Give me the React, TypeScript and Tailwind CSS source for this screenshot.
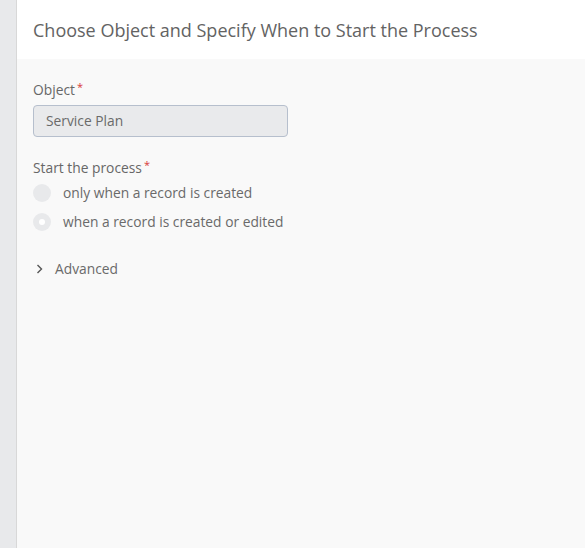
export default function App() {
  return (
    <div className="flex h-[548px] w-[585px] overflow-hidden" style={{ fontFamily: '"Open Sans", "Noto Sans", sans-serif' }}>
      <div className="w-[17px] shrink-0 bg-[#e8e9eb] border-r border-[#d8d8d8]" />
      <div className="flex flex-1 flex-col bg-[#f9f9f9]">
        <div className="flex h-[59px] items-center bg-white pl-[16px]">
          <h1 className="text-[18px] text-[#636363] leading-none">Choose Object and Specify When to Start the Process</h1>
        </div>
        <div className="flex flex-col pl-[16px] pt-[22px]">
          <div className="flex h-[18px] items-start text-[13.8px] leading-[18px] text-[#676767]">
            <span>Object</span>
            <span className="ml-[2px] text-[11px] leading-[12px] text-[#d83a3a]">*</span>
          </div>
          <div className="mt-[6px] flex h-[32px] w-[255px] items-center rounded-[4px] border border-[#b6bfcd] bg-[#e9eaec] pl-[12px] text-[13.8px] text-[#6a6a6a]">
            Service Plan
          </div>
          <div className="mt-[22px] flex h-[18px] items-start text-[13.8px] leading-[18px] text-[#676767]">
            <span>Start the process</span>
            <span className="ml-[2px] text-[11px] leading-[12px] text-[#d83a3a]">*</span>
          </div>
          <div className="mt-[7px] flex h-[18px] items-center gap-[12px] text-[13.8px] leading-[18px] text-[#6a6a6a]">
            <span className="h-[18px] w-[18px] rounded-full bg-[#e8e9eb]" />
            <span>only when a record is created</span>
          </div>
          <div className="mt-[11px] flex h-[18px] items-center gap-[12px] text-[13.8px] leading-[18px] text-[#6a6a6a]">
            <span className="flex h-[18px] w-[18px] items-center justify-center rounded-full bg-[#e8e9eb]">
              <span className="h-[6px] w-[6px] rounded-full bg-white" />
            </span>
            <span>when a record is created or edited</span>
          </div>
          <div className="mt-[29px] flex h-[18px] items-center gap-[9px] text-[13.8px] leading-[18px] text-[#6a6a6a]">
            <svg width="12" height="12" viewBox="0 0 12 12" className="ml-[1px]">
              <path d="M3.5 2 L7.5 6 L3.5 10" fill="none" stroke="#555" strokeWidth="1.4" />
            </svg>
            <span>Advanced</span>
          </div>
        </div>
      </div>
    </div>
  );
}
